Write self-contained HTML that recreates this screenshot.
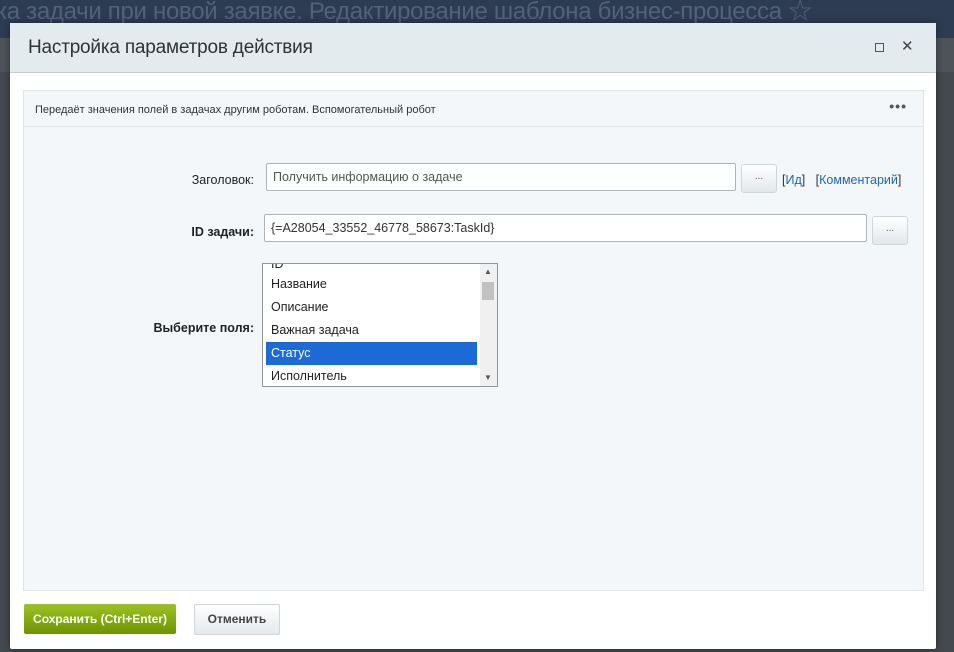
<!DOCTYPE html>
<html><head><meta charset="utf-8"><style>
*{box-sizing:border-box;margin:0;padding:0}
body{width:954px;height:652px;overflow:hidden;background:#43494f;font-family:"Liberation Sans","Noto Sans CJK SC",sans-serif;position:relative}
.top{position:absolute;left:0;top:0;width:954px;height:38px;background:#2d3c52}
.top span{position:absolute;left:-4px;top:-9px;font-size:24px;color:#52627a;white-space:nowrap;letter-spacing:-0.3px}
.band{position:absolute;left:0;top:38px;width:954px;height:34px;background:#4d5359}
.dlg{position:absolute;left:10px;top:23px;width:926px;height:626px;background:#fff;border-radius:2px;box-shadow:0 0 8px rgba(0,0,0,.4)}
.hd{height:50px;background:#e4ebee;border-bottom:1px solid #c3c9cc;position:relative}
.hd h1{font-weight:normal;font-size:19px;color:#2d3337;position:absolute;left:18px;top:14px;letter-spacing:-0.2px}
.hd .mx{position:absolute;left:865px;top:20px;width:9px;height:9px;border:1px solid #555}
.hd .x{position:absolute;left:891px;top:14px;font-size:15px;color:#444}
.panel{position:absolute;left:13px;top:67px;width:901px;height:501px;background:#f4f7f9;border:1px solid #dfe5e8}
.desc{height:36px;border-bottom:1px solid #e1e6e9;font-size:11px;color:#333;padding:13px 0 0 11px;position:relative}
.desc b{position:absolute;right:16px;top:7px;font-size:14px;color:#555;letter-spacing:1px}
.lbl{position:absolute;font-size:12.5px;color:#222;text-align:right}
.inp{position:absolute;background:#fff;border:1px solid #aeb5ba;border-radius:2px;font-size:12.5px;color:#555;padding:6px 6px}
.btn{position:absolute;width:36px;height:29px;border:1px solid #cfd6da;border-radius:3px;background:linear-gradient(#fff,#e3e8eb);font-size:10px;color:#555;text-align:center;line-height:24px}
a{color:#2067b0}
.lst{position:absolute;left:238px;top:172px;width:236px;height:124px;background:#fff;border:1px solid #8e969b;overflow:hidden;font-size:12.5px;color:#222}
.it{height:23px;line-height:23px;padding-left:5px;width:211px;margin-left:3px}
.sb{position:absolute;right:0;top:0;width:17px;height:122px;background:#f0f0f0}
.thumb{position:absolute;top:18px;left:2px;width:12px;height:18px;background:#c1c1c1}
.ar{position:absolute;left:4px;font-size:8px;color:#555;line-height:10px}
.save{position:absolute;left:14px;top:581px;width:152px;height:30px;background:linear-gradient(#9ec225,#6d9400);border-radius:2px;color:#fff;font-size:12px;font-weight:bold;text-align:center;line-height:30px}
.cancel{position:absolute;left:184px;top:581px;width:86px;height:31px;background:linear-gradient(#fff,#e4e9ec);border:1px solid #d0d6d9;border-radius:2px;color:#444;font-size:12px;font-weight:bold;text-align:center;line-height:29px}
</style></head><body>
<div class="top"><span>ка задачи при новой заявке. Редактирование шаблона бизнес-процесса ☆</span></div>
<div class="band"></div>
<div class="dlg">
<div class="hd"><h1>Настройка параметров действия</h1><div class="mx"></div><div class="x">✕</div></div>
<div class="panel">
<div class="desc">Передаёт значения полей в задачах другим роботам. Вспомогательный робот<b>•••</b></div>
<div class="lbl" style="left:140px;top:82px;width:90px">Заголовок:</div>
<div class="inp" style="left:242px;top:72px;width:470px;height:28px">Получить информацию о задаче</div>
<div class="btn" style="left:717px;top:73px">...</div>
<div style="position:absolute;left:758px;top:82px;font-size:12.5px;color:#333">[<a>Ид</a>]&nbsp;&nbsp; [<a>Комментарий</a>]</div>
<div class="lbl" style="left:140px;top:134px;width:90px;font-weight:bold">ID задачи:</div>
<div class="inp" style="left:240px;top:123px;width:603px;height:28px;color:#333">{=A28054_33552_46778_58673:TaskId}</div>
<div class="btn" style="left:848px;top:125px">...</div>
<div class="lbl" style="left:110px;top:230px;width:120px;font-weight:bold">Выберите поля:</div>
<div class="lst">
<div class="it" style="height:9px;line-height:0;overflow:hidden">ID</div>
<div class="it">Название</div><div class="it">Описание</div><div class="it">Важная задача</div>
<div class="it" style="background:#1b6ad5;color:#fff">Статус</div><div class="it">Исполнитель</div>
<div class="sb"><div class="thumb"></div><span class="ar" style="top:3px">▲</span><span class="ar" style="bottom:3px">▼</span></div>
</div>
</div>
<div class="save">Сохранить (Ctrl+Enter)</div><div class="cancel">Отменить</div>
</div>
</body></html>
